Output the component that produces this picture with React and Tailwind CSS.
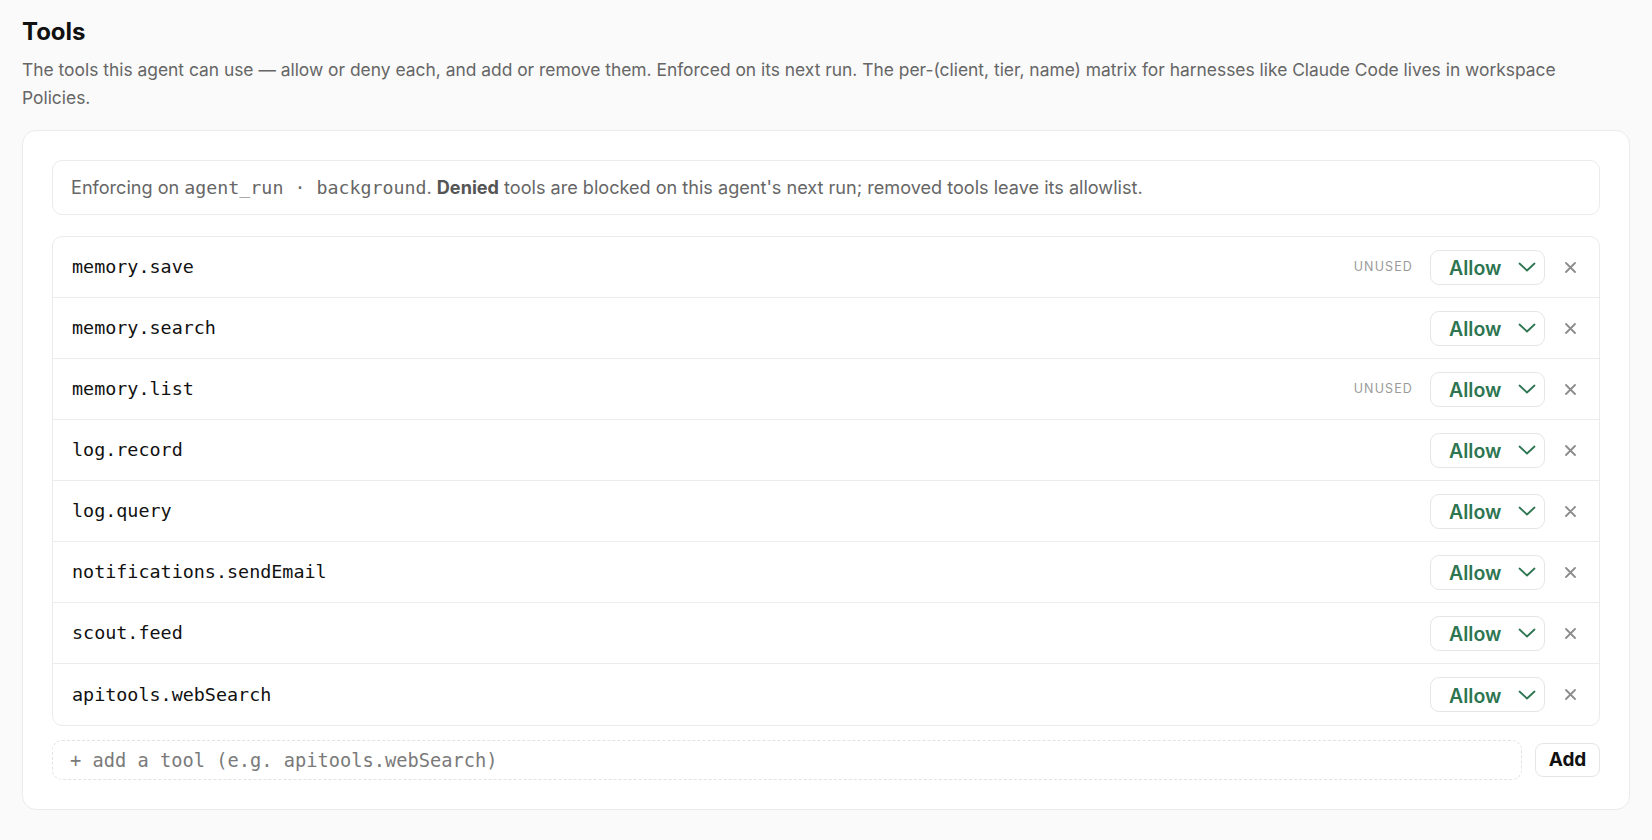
import React, { useState } from "react";

const SANS = { fontFamily: "Inter, 'Noto Sans', sans-serif" };
const MONO = { fontFamily: "'DejaVu Sans Mono', 'Liberation Mono', monospace" };

const TOOLS = [
  { name: "memory.save", unused: true },
  { name: "memory.search" },
  { name: "memory.list", unused: true },
  { name: "log.record" },
  { name: "log.query" },
  { name: "notifications.sendEmail" },
  { name: "scout.feed" },
  { name: "apitools.webSearch" },
];

function Chevron() {
  return (
    <svg width="18" height="10" viewBox="0 0 18 10" fill="none">
      <polyline points="1.5,1.5 9,8.5 16.5,1.5" stroke="#2e7551" strokeWidth="1.8" strokeLinecap="round" strokeLinejoin="round" />
    </svg>
  );
}

function Cross() {
  return (
    <svg width="11" height="11" viewBox="0 0 11 11" fill="none">
      <path d="M1 1 L10 10 M10 1 L1 10" stroke="#8c8c8c" strokeWidth="1.8" strokeLinecap="round" />
    </svg>
  );
}

function ToolRow({ tool, last }) {
  return (
    <div className={"flex items-center h-[61px] pl-[19px] pr-[23px] " + (last ? "" : "border-b border-[#ececec]")}>
      <span className="text-[18.4px] text-[#111]" style={MONO}>{tool.name}</span>
      <div className="ml-auto flex items-center">
        {tool.unused && (
          <span className="mr-[17px] text-[12.5px] tracking-[0.09em] text-[#9a9a9a]" style={SANS}>UNUSED</span>
        )}
        <button className="flex items-center justify-between w-[115px] h-[35px] pl-[18px] pr-[8px] rounded-[9px] border border-[#e6e6e6] bg-white">
          <span className="text-[19.5px] leading-[24px] pt-[2px] font-semibold text-[#2e7551]" style={SANS}>Allow</span>
          <Chevron />
        </button>
        <button className="ml-[19px] flex items-center justify-center w-[12px] h-[12px]">
          <Cross />
        </button>
      </div>
    </div>
  );
}

export default function App() {
  const [draft, setDraft] = useState("");

  return (
    <div className="min-h-[840px] bg-[#fafafa] px-[22px] pt-[16px] pb-[29px]" style={SANS}>
      <h1 className="text-[24px] leading-[32px] font-bold text-[#111]">Tools</h1>
      <p className="mt-[8px] text-[17.4px] leading-[27.5px] text-[#666] pr-[30px]">
        The tools this agent can use — allow or deny each, and add or remove them. Enforced on its next run. The
        per-(client, tier, name) matrix for harnesses like Claude Code lives in workspace Policies.
      </p>

      <div className="mt-[19px] rounded-[14px] border border-[#ebebeb] bg-white p-[29px]">
        <div className="flex items-center h-[55px] px-[18px] rounded-[10px] border border-[#ebebeb] text-[18.1px] text-[#666]">
          <span>
            Enforcing on <span className="text-[18.3px]" style={MONO}>agent_run · background</span>.{" "}
            <span className="font-bold text-[#555]">Denied</span> tools are blocked on this agent's next run; removed
            tools leave its allowlist.
          </span>
        </div>

        <div className="mt-[21px] rounded-[10px] border border-[#ebebeb]">
          {TOOLS.map((t, i) => (
            <ToolRow key={t.name} tool={t} last={i === TOOLS.length - 1} />
          ))}
        </div>

        <div className="mt-[14px] flex items-center gap-[13px]">
          <input
            value={draft}
            onChange={(e) => setDraft(e.target.value)}
            placeholder="+ add a tool (e.g. apitools.webSearch)"
            className="flex-1 h-[40px] px-[17px] rounded-[10px] border border-dashed border-[#e2e2e2] text-[18.7px] text-[#111] placeholder:text-[#7a7a7a] outline-none"
            style={MONO}
          />
          <button className="w-[65px] h-[34px] rounded-[8px] border border-[#e6e6e6] bg-white text-[19px] font-bold text-[#111]">
            Add
          </button>
        </div>
      </div>
    </div>
  );
}
